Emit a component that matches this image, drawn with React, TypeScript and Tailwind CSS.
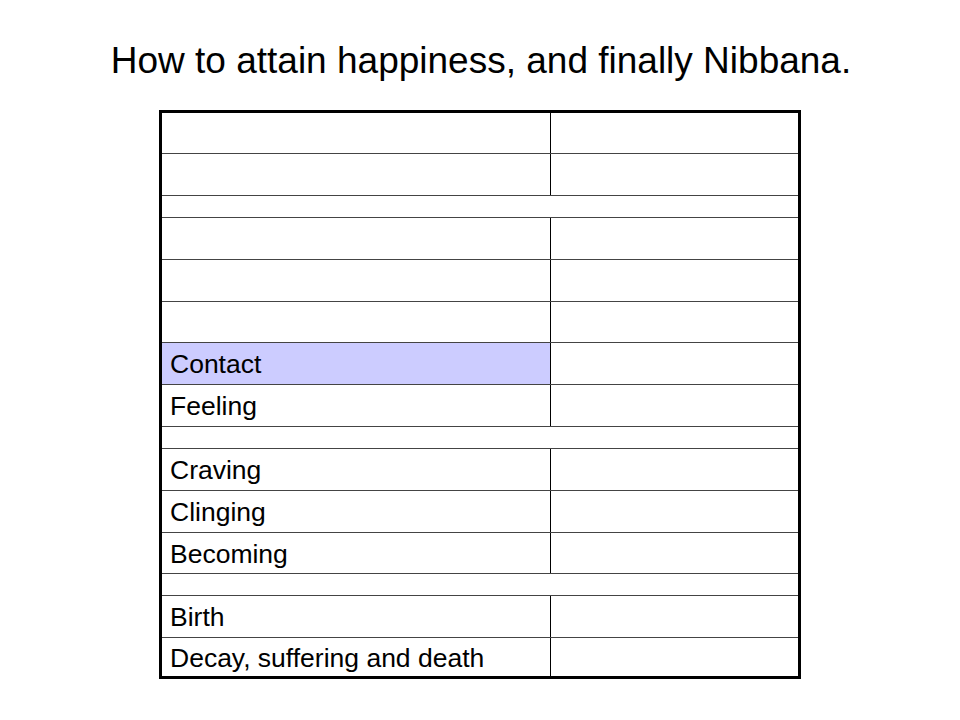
import React from "react";

type Row = { kind: "row" | "spacer"; label?: string; h: string; top: boolean; hl?: boolean };

const rows: Row[] = [
  { kind: "row", h: "h-[40px]", top: false },
  { kind: "row", h: "h-[42px]", top: true },
  { kind: "spacer", h: "h-[22px]", top: true },
  { kind: "row", h: "h-[42px]", top: true },
  { kind: "row", h: "h-[42px]", top: true },
  { kind: "row", h: "h-[41px]", top: true },
  { kind: "row", label: "Contact", h: "h-[42px]", top: true, hl: true },
  { kind: "row", label: "Feeling", h: "h-[42px]", top: true },
  { kind: "spacer", h: "h-[22px]", top: true },
  { kind: "row", label: "Craving", h: "h-[42px]", top: true },
  { kind: "row", label: "Clinging", h: "h-[42px]", top: true },
  { kind: "row", label: "Becoming", h: "h-[41px]", top: true },
  { kind: "spacer", h: "h-[22px]", top: true },
  { kind: "row", label: "Birth", h: "h-[42px]", top: true },
  { kind: "row", label: "Decay, suffering and death", h: "h-[39px]", top: true },
];

export default function App() {
  return (
    <div
      className="w-[960px] h-[720px] bg-white flex flex-col items-center text-black"
      style={{ fontFamily: '"Liberation Sans", Arial, sans-serif' }}
    >
      <h1 className="mt-[42px] ml-[2px] text-[37px] leading-[37px] font-normal whitespace-nowrap">
        How to attain happiness, and finally Nibbana.
      </h1>
      <div className="mt-[31px] w-[642px] border-[3px] border-black flex flex-col">
        {rows.map((r, i) => (
          <div
            key={i}
            className={`${r.h} flex ${r.top ? "border-t border-[#444]" : ""}`}
          >
            {r.kind === "row" ? (
              <>
                <div
                  className={`w-[389px] border-r border-black flex items-center pl-[8px] pt-[2px] text-[26.5px] leading-none ${
                    r.hl ? "bg-[#ccccff]" : ""
                  }`}
                >
                  {r.label}
                </div>
                <div className="flex-1" />
              </>
            ) : null}
          </div>
        ))}
      </div>
    </div>
  );
}
